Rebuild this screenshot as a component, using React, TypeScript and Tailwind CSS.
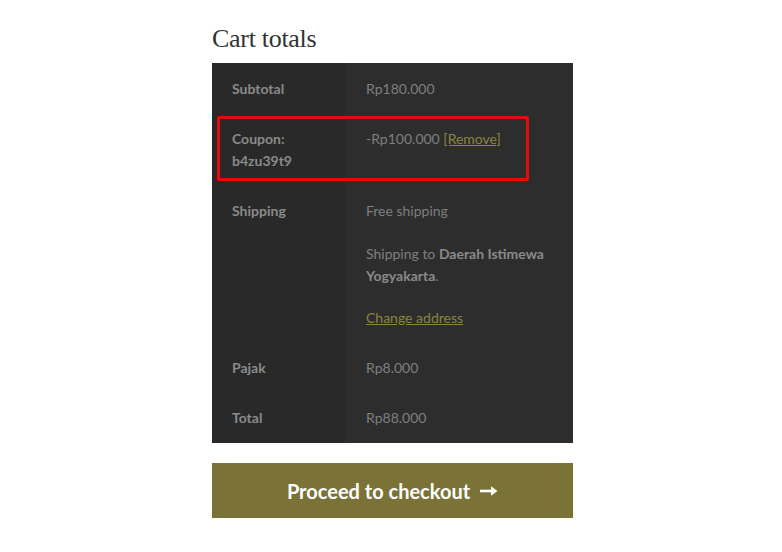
import React from "react";

const label = "text-[14px] font-bold text-[#8a8a8a]";
const value = "text-[14px] text-[#7f7f7f]";

function Row({ l, children, last = false }: { l: React.ReactNode; children: React.ReactNode; last?: boolean }) {
  const pb = last ? "pb-[14px]" : "pb-[13px]";
  return (
    <div className="grid grid-cols-[133px_1fr]">
      <div className={`bg-[#292929] pl-[20px] pr-2 pt-[15px] ${pb} leading-[22px] ${label}`}>{l}</div>
      <div className={`bg-[#2d2d2d] pl-[21px] pr-4 pt-[15px] ${pb} leading-[22px] ${value}`}>{children}</div>
    </div>
  );
}

export default function App() {
  return (
    <div className="w-[782px] h-[552px] bg-white relative" style={{ fontFamily: "Lato, 'Open Sans', sans-serif" }}>
      <div className="absolute left-[212px] top-[24px] w-[361px]">
        <h2 className="text-[26px] leading-[30px] text-[#333333] tracking-[-0.3px]" style={{ fontFamily: "'Liberation Serif', 'DejaVu Serif', serif" }}>
          Cart totals
        </h2>
        <div className="mt-[9px] relative">
          <Row l="Subtotal">Rp180.000</Row>
          <Row l={<>Coupon:<br />b4zu39t9</>}>
            -Rp100.000 <a className="text-[#8b8540] underline">[Remove]</a>
          </Row>
          <Row l="Shipping">
            <p>Free shipping</p>
            <p className="mt-[21px]">
              Shipping to <strong className="text-[#8a8a8a]">Daerah Istimewa Yogyakarta</strong>.
            </p>
            <p className="mt-[20px]">
              <a className="text-[#8b8540] underline">Change address</a>
            </p>
          </Row>
          <Row l="Pajak">Rp8.000</Row>
          <Row l="Total" last>Rp88.000</Row>
          <div className="absolute left-[5px] top-[53px] w-[312px] h-[65px] border-[3px] border-[#e30b0b] rounded-[2px] pointer-events-none" />
        </div>
        <button className="mt-[20px] w-full h-[55px] bg-[#7a7236] text-white text-[20px] font-bold flex items-center justify-center gap-[10px]">
          <span>Proceed to checkout</span>
          <svg width="18" height="12" viewBox="0 0 18 12" fill="none">
            <path d="M0 6 H12" stroke="white" strokeWidth="2.6" />
            <path d="M11 1.2 L17.5 6 L11 10.8 Z" fill="white" />
          </svg>
        </button>
      </div>
    </div>
  );
}
